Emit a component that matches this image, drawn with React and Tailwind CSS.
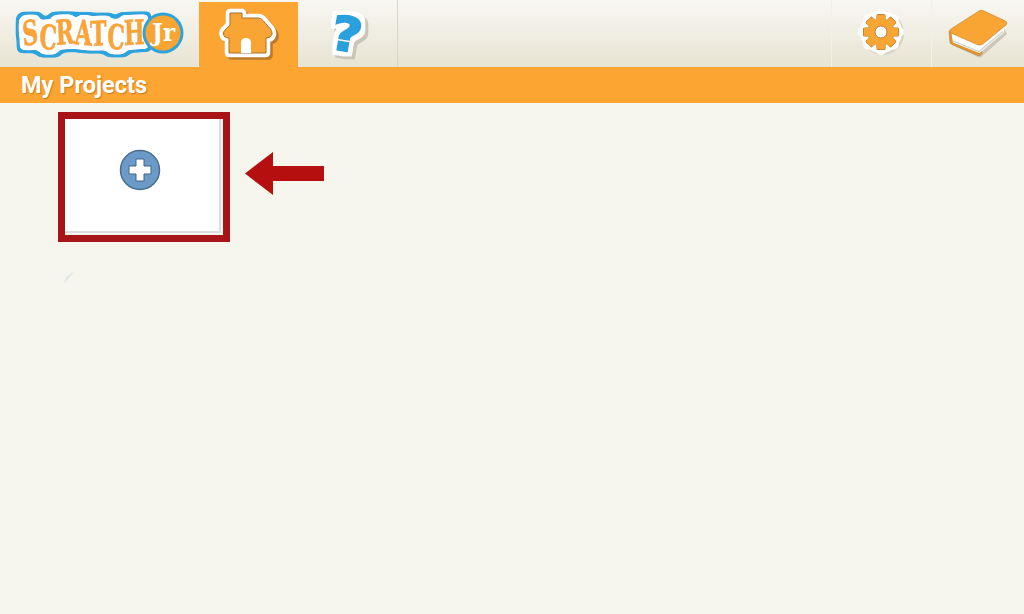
const FONT = "font-['Roboto','Liberation_Sans',sans-serif]";

// grows the alpha of a text into a rounded solid colour band
function Halo({ radius, soft, color, result }) {
  return (
    <>
      <feMorphology in="SourceAlpha" operator="dilate" radius={radius} />
      <feGaussianBlur stdDeviation={soft} />
      <feComponentTransfer result={`${result}Shape`}>
        <feFuncA type="linear" slope="8" intercept="-3" />
      </feComponentTransfer>
      <feFlood floodColor={color} />
      <feComposite in2={`${result}Shape`} operator="in" result={result} />
    </>
  );
}

function Logo() {
  return (
    <svg width="176" height="52" viewBox="11 6 176 52">
      <defs>
        <filter id="logoHalo" filterUnits="userSpaceOnUse" x="0" y="0" width="200" height="64">
          <Halo radius="7" soft="2.5" color="#2fa4dc" result="blue" />
          <Halo radius="4" soft="2" color="#ffffff" result="white" />
          <feMerge>
            <feMergeNode in="blue" />
            <feMergeNode in="white" />
            <feMergeNode in="SourceGraphic" />
          </feMerge>
        </filter>
      </defs>
      <text
        x="23"
        y="44"
        dy="0 2 -3 -1 2 2 -3"
        rotate="-6 5 -4 3 -2 4 -2"
        fontFamily="'DejaVu Serif', serif"
        fontWeight="700"
        fontSize="34"
        textLength="122"
        lengthAdjust="spacingAndGlyphs"
        fill="#f9a534"
        stroke="#f9a534"
        strokeWidth="0.9"
        filter="url(#logoHalo)"
      >
        SCRATCH
      </text>
      <circle cx="163" cy="31" r="20.5" fill="#2fa4dc" />
      <circle cx="163" cy="31" r="17.5" fill="#f9a534" />
      <text x="152" y="39" fontFamily="'DejaVu Serif', serif" fontWeight="700" fontSize="24" textLength="23" lengthAdjust="spacingAndGlyphs" fill="#ffffff">
        Jr
      </text>
    </svg>
  );
}

function HomeIcon() {
  const house = "M10 46 V31 Q5 31 4.5 27 Q4 25 6 23 L11 18 V6 H23 V11 H39 Q42 11 44 13.5 L51.5 22 Q53.5 25 53 27.5 Q52 31 47 31 V46 Z";
  return (
    <svg width="60" height="54" viewBox="0 0 60 54">
      <path d={house} transform="translate(2.5 2.5)" fill="#bb7b2b" stroke="#bb7b2b" strokeWidth="8.5" strokeLinejoin="round" />
      <path d={house} fill="#ffffff" stroke="#ffffff" strokeWidth="8.5" strokeLinejoin="round" />
      <path d={house} fill="#f9a534" stroke="#a8712c" strokeWidth="1" strokeLinejoin="round" />
      <path d="M22 46 V36 Q22 31 27 31 Q32 31 32 36 V46 Z" fill="#ffffff" />
    </svg>
  );
}

function HelpIcon() {
  return (
    <svg width="60" height="66" viewBox="0 0 60 66">
      <defs>
        <filter id="helpHalo" filterUnits="userSpaceOnUse" x="0" y="0" width="60" height="66">
          <feMorphology in="SourceAlpha" operator="dilate" radius="3.5" result="grown" />
          <feOffset in="grown" dx="3" dy="3" result="moved" />
          <feFlood floodColor="#c9c6b8" />
          <feComposite in2="moved" operator="in" result="shade" />
          <feFlood floodColor="#ffffff" />
          <feComposite in2="grown" operator="in" result="white" />
          <feMerge>
            <feMergeNode in="shade" />
            <feMergeNode in="white" />
            <feMergeNode in="SourceGraphic" />
          </feMerge>
        </filter>
      </defs>
      <g filter="url(#helpHalo)">
        <text
          x="29"
          y="50"
          textAnchor="middle"
          fontFamily="'DejaVu Sans', sans-serif"
          fontWeight="700"
          fontSize="47"
          fill="#29a1de"
          stroke="#29a1de"
          strokeWidth="2.2"
          transform="translate(29 32) rotate(10) scale(1.12 1) translate(-29 -32)"
        >
          ?
        </text>
      </g>
    </svg>
  );
}

function GearIcon() {
  const angles = [0, 45, 90, 135, 180, 225, 270, 315];
  const cog = (fill) => (
    <>
      {angles.map((a) => (
        <rect key={a} x="19.5" y="6" width="9" height="10" rx="1.5" fill={fill} transform={`rotate(${a} 24 24)`} />
      ))}
      <circle cx="24" cy="24" r="13.5" fill={fill} />
    </>
  );
  return (
    <svg width="50" height="50" viewBox="0 0 50 50">
      <circle cx="25.5" cy="25.5" r="21.5" fill="#d6d3c5" />
      {angles.map((a) => (
        <circle key={a} cx="24" cy="6" r="5" fill="#ffffff" transform={`rotate(${a} 24 24)`} />
      ))}
      <circle cx="24" cy="24" r="21" fill="#ffffff" />
      {cog("#b07a30")}
      <g transform="translate(24 24) scale(.96) translate(-24 -24)">{cog("#f9a534")}</g>
      <circle cx="24" cy="24" r="6" fill="#ffffff" stroke="#a8712c" strokeWidth=".8" />
    </svg>
  );
}

function BookIcon() {
  // drawn 1:1 from the picture, origin at the icon's top left
  return (
    <svg width="62" height="52" viewBox="0 0 62 52">
      <path d="M8 38 L33 50 L60 26 L58 22 L33 44 Z" fill="#cbc8b8" />
      <path d="M2 23 L3 34 Q3 36 6 37 L31 47.5 Q33 48 35 46 L34 37 Z" fill="#e2962f" stroke="#b97c30" strokeWidth=".6" />
      <path d="M4.5 25 L6 34.5 L32.5 45 L57 24.5 L57 17 L33 36 Z" fill="#ffffff" />
      <path d="M6 33 L32 43.5 L56 23.5" fill="none" stroke="#cfcfca" strokeWidth="1.2" />
      <path d="M32 3 Q34 1.5 37 3 L58.5 13 Q61 15 59 17 L36 36 Q33 38 30 36.5 L4 25 Q1 23 4 21 Z" fill="#f9a534" stroke="#c98a33" strokeWidth=".7" strokeLinejoin="round" />
    </svg>
  );
}

function PlusButton() {
  return (
    <svg width="42" height="42" viewBox="0 0 42 42">
      <circle cx="21" cy="21" r="19.5" fill="#6b9ac8" stroke="#4a6d8e" strokeWidth="1.5" />
      <path d="M17 10 H25 V17 H32 V25 H25 V32 H17 V25 H10 V17 H17 Z" fill="#ffffff" stroke="#3f6488" strokeWidth="1" strokeLinejoin="round" />
    </svg>
  );
}

function ArrowMark() {
  return (
    <svg width="79" height="43" viewBox="0 0 79 43" className="shrink-0 mt-[40px]">
      <path d="M0 21.5 L28 0 V14 H79 V29 H28 V43 Z" fill="#b50f10" />
    </svg>
  );
}

export default function App() {
  return (
    <div className={`w-[1024px] h-[614px] flex flex-col overflow-hidden bg-[#f6f5ee] ${FONT}`}>
      {/* Top bar */}
      <div className="h-[67px] flex shrink-0 bg-gradient-to-b from-[#f8f7f2] to-[#e8e4d3]">
        <div className="w-[199px] flex items-center pl-[11px] border-r border-[#f3f1e6]">
          <Logo />
        </div>
        <div className="w-[99px] mt-[2px] pb-[2px] flex items-center justify-center bg-[#fca532]">
          <HomeIcon />
        </div>
        <div className="w-[100px] flex items-center justify-center border-r border-[#d9d6c5]">
          <HelpIcon />
        </div>
        <div className="flex-1" />
        <div className="w-[100px] pb-[2px] flex items-center justify-center border-l border-[#f3f1e6]">
          <GearIcon />
        </div>
        <div className="w-[93px] flex items-center justify-center border-l border-[#f3f1e6]">
          <BookIcon />
        </div>
      </div>

      {/* Title strip */}
      <div className="h-[36px] flex items-center pl-[21px] pt-[2px] bg-[#fca532] shrink-0">
        <span className="text-[23.5px] font-bold text-white [text-shadow:1px_1px_1px_rgba(140,90,20,0.5)]">My Projects</span>
      </div>

      {/* Projects */}
      <div className="flex flex-col pl-[58px] pt-[9px]">
        <div className="flex items-start gap-[15px]">
          <div className="w-[172px] h-[130px] border-[7px] border-[#a81518] bg-[#f6f5ee]">
            <div className="w-[156px] h-[114px] flex items-center justify-center pb-[10px] pr-[4px] bg-white border-r-2 border-b-2 border-[#dcdde0]">
              <PlusButton />
            </div>
          </div>
          <ArrowMark />
        </div>
        <svg width="12" height="14" viewBox="0 0 12 14" className="mt-[29px] ml-[5px]">
          <path d="M1 12 L3 6 L11 1 L5 8 Z" fill="#dfe6e6" />
        </svg>
      </div>
    </div>
  );
}
